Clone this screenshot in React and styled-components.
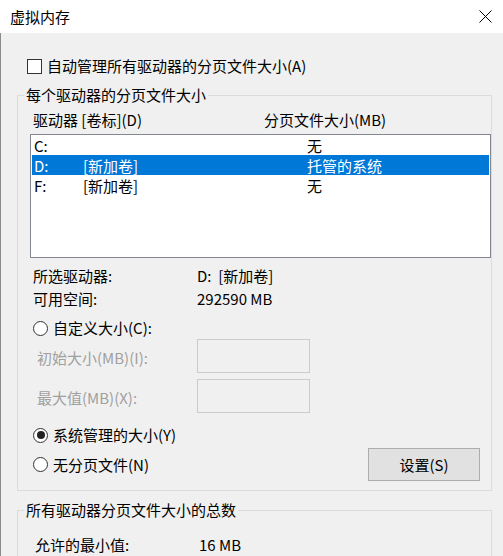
import React from "react";
import styled, { createGlobalStyle } from "styled-components";

const Global = createGlobalStyle`
  html, body { margin: 0; padding: 0; background: #f0f0f0; }
  body { font-family: "Noto Sans CJK SC", "Noto Sans", sans-serif; font-size: 15px; color: #000; }
  * { box-sizing: border-box; }
`;

const Window = styled.div`
  width: 503px;
  height: 556px;
  display: flex;
  flex-direction: column;
  overflow: hidden;
`;

const TitleBar = styled.div`
  height: 33px;
  flex: none;
  background: #fff;
  display: flex;
  align-items: center;
  justify-content: space-between;
  padding: 0 11px 1px 10px;
  font-size: 15px;
`;

const Body = styled.div`
  flex: 1;
  background: #f0f0f0;
  border-left: 1px solid #8c8c8c;
  padding: 0 11px 0 16px;
  display: flex;
  flex-direction: column;
`;

const CheckRow = styled.label`
  display: flex;
  align-items: center;
  gap: 5px;
  height: 20px;
  margin-top: 23px;
  padding-left: 10px;
  line-height: 20px;
`;

const Box = styled.span`
  width: 15px;
  height: 15px;
  flex: none;
  background: #fff;
  border: 1px solid #333;
`;

const Group = styled.fieldset`
  margin: ${(p) => p.$top}px 0 0 0;
  padding: 0 0 ${(p) => p.$bottom}px 0;
  border: 1px solid #dcdcdc;
  min-width: 0;
  flex: none;
`;

const Legend = styled.legend`
  margin-left: 6px;
  padding: 0 2px;
  line-height: 20px;
  font-size: 15px;
`;

const HeaderRow = styled.div`
  display: grid;
  grid-template-columns: 231px 1fr;
  padding-left: 15px;
  margin-top: 5px;
  line-height: 20px;
`;

const ListBox = styled.div`
  margin: 4px 0 0 12px;
  height: 124px;
  background: #fff;
  border: 1px solid #828790;
  padding: 0 1px;
`;

const ListRow = styled.div`
  display: grid;
  grid-template-columns: 49px 224px 1fr;
  height: 20px;
  padding: 2px 0 0 2px;
  line-height: 18px;
  background: ${(p) => (p.$selected ? "#0078d7" : "transparent")};
  color: ${(p) => (p.$selected ? "#fff" : "#000")};
  white-space: pre;
`;

const InfoRow = styled.div`
  display: grid;
  grid-template-columns: ${(p) => p.$col}px 1fr;
  padding-left: ${(p) => p.$indent}px;
  margin-top: ${(p) => p.$top || 0}px;
  line-height: ${(p) => p.$lh || 23}px;
  white-space: pre;
`;

const RadioRow = styled.label`
  display: flex;
  align-items: center;
  gap: 5px;
  height: 20px;
  line-height: 20px;
  padding-left: 15px;
  margin-top: ${(p) => p.$top || 0}px;
`;

const Circle = styled.span`
  width: 15px;
  height: 15px;
  flex: none;
  border-radius: 50%;
  border: 1px solid #333;
  background: #fff;
  display: flex;
  align-items: center;
  justify-content: center;
  &::after {
    content: "";
    width: 8px;
    height: 8px;
    border-radius: 50%;
    background: #222;
    display: ${(p) => (p.$checked ? "block" : "none")};
  }
`;

const FieldRow = styled.div`
  display: grid;
  grid-template-columns: 160px 113px;
  align-items: center;
  padding-left: 19px;
  margin-top: ${(p) => p.$top}px;
  color: #a0a0a0;
`;

const FieldLabel = styled.span`
  line-height: 20px;
  padding-top: 3px;
`;

const Input = styled.div`
  height: 34px;
  border: 1px solid #cccccc;
  background: #f0f0f0;
`;

const ActionRow = styled.div`
  display: flex;
  align-items: center;
  justify-content: space-between;
  margin-top: 3px;
  padding-right: 11px;
`;

const Button = styled.button`
  width: 112px;
  height: 33px;
  background: #e1e1e1;
  border: 1px solid #adadad;
  font-family: inherit;
  font-size: 15px;
  color: #000;
  padding: 0;
  line-height: 20px;
`;

const Radio = ({ checked, top, children }) => (
  <RadioRow $top={top}>
    <Circle $checked={checked} />
    <span>{children}</span>
  </RadioRow>
);

const drives = [
  { d: "C:", label: "", size: "无" },
  { d: "D:", label: "[新加卷]", size: "托管的系统", selected: true },
  { d: "F:", label: "[新加卷]", size: "无" },
];

export default function App() {
  return (
    <>
      <Global />
      <Window>
        <TitleBar>
          <span>虚拟内存</span>
          <svg width="13" height="13" viewBox="0 0 13 13">
            <path d="M0.5 0.5 L12.5 12.5 M12.5 0.5 L0.5 12.5" stroke="#000" strokeWidth="1" fill="none" />
          </svg>
        </TitleBar>
        <Body>
          <CheckRow>
            <Box />
            <span>自动管理所有驱动器的分页文件大小(A)</span>
          </CheckRow>
          <Group $top={9} $bottom={9}>
            <Legend>每个驱动器的分页文件大小</Legend>
            <HeaderRow>
              <span>驱动器 [卷标](D)</span>
              <span>分页文件大小(MB)</span>
            </HeaderRow>
            <ListBox>
              {drives.map((r) => (
                <ListRow key={r.d} $selected={r.selected}>
                  <span>{r.d}</span>
                  <span>{r.label}</span>
                  <span>{r.size}</span>
                </ListRow>
              ))}
            </ListBox>
            <InfoRow $col={164} $indent={15} $top={6}>
              <span>所选驱动器:</span>
              <span>D:  [新加卷]</span>
            </InfoRow>
            <InfoRow $col={164} $indent={15}>
              <span>可用空间:</span>
              <span>292590 MB</span>
            </InfoRow>
            <Radio top={8}>自定义大小(C):</Radio>
            <FieldRow $top={1}>
              <FieldLabel>初始大小(MB)(I):</FieldLabel>
              <Input />
            </FieldRow>
            <FieldRow $top={6}>
              <FieldLabel>最大值(MB)(X):</FieldLabel>
              <Input />
            </FieldRow>
            <Radio checked top={12}>系统管理的大小(Y)</Radio>
            <ActionRow>
              <Radio>无分页文件(N)</Radio>
              <Button>设置(S)</Button>
            </ActionRow>
          </Group>
          <Group $top={9} $bottom={20}>
            <Legend>所有驱动器分页文件大小的总数</Legend>
            <InfoRow $col={164} $indent={17} $top={14} $lh={22}>
              <span>允许的最小值:</span>
              <span>16 MB</span>
            </InfoRow>
          </Group>
        </Body>
      </Window>
    </>
  );
}
